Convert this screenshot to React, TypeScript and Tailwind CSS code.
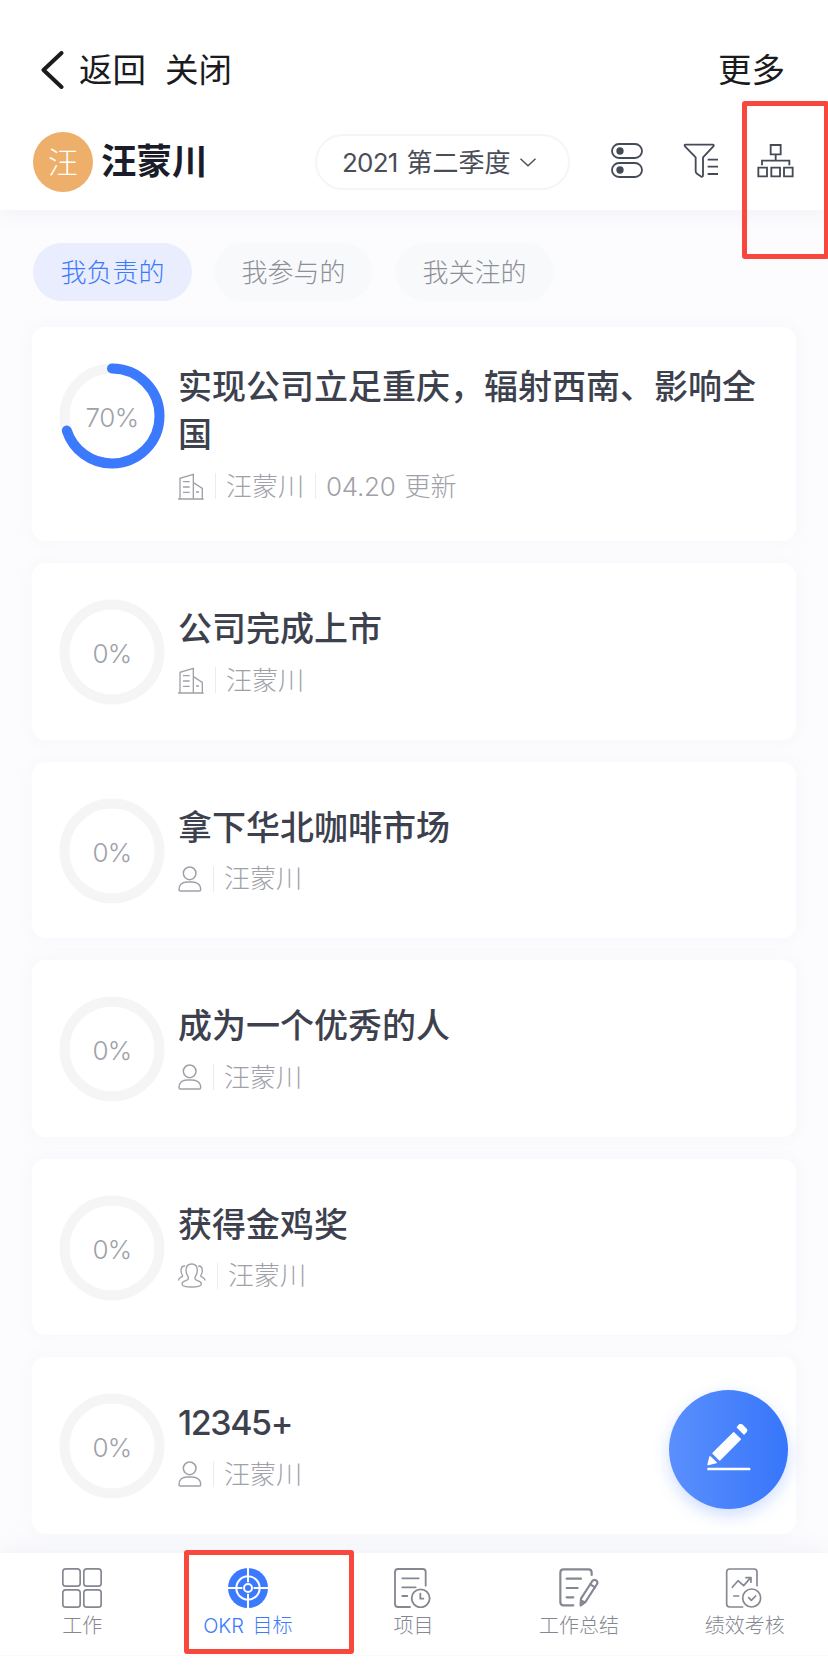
import React from "react";

type Owner = "company" | "person" | "team";

interface Objective {
  title: string;
  progress: number;
  owner: Owner;
  updated?: string;
}

const objectives: Objective[] = [
  { title: "实现公司立足重庆，辐射西南、影响全国", progress: 70, owner: "company", updated: "04.20" },
  { title: "公司完成上市", progress: 0, owner: "company" },
  { title: "拿下华北咖啡市场", progress: 0, owner: "person" },
  { title: "成为一个优秀的人", progress: 0, owner: "person" },
  { title: "获得金鸡奖", progress: 0, owner: "team" },
  { title: "12345+", progress: 0, owner: "person" },
];

const tabs = ["我负责的", "我参与的", "我关注的"];

const OwnerIcon = ({ owner }: { owner: Owner }) => {
  if (owner === "company") {
    return (
      <svg className="w-[26px] h-[27px]" viewBox="0 0 78 81" fill="none" stroke="currentColor" strokeWidth="4">
        <path d="M6 78V16L46 4v74M46 29l27 17v32M0 78h77M15 26h20M15 42h20M15 58h20M54 57h9" />
      </svg>
    );
  }
  if (owner === "person") {
    return (
      <svg className="w-[24px] h-[26px]" viewBox="0 0 72 78" fill="none" stroke="currentColor" strokeWidth="4.5">
        <circle cx="35" cy="22" r="19" />
        <path d="M3 71C3 55 14 48 27 48h15c14 0 26 7 26 23 0 3-1 4-4 4H7c-3 0-4-1-4-4Z" />
      </svg>
    );
  }
  return (
    <svg className="w-[28px] h-[25px]" viewBox="0 0 84 75" fill="none" stroke="currentColor" strokeWidth="4" strokeLinecap="round">
      <path d="M41 3c-11 0-17 8-17 19 0 9 3 14 6 19 3 6 0 9-7 12-8 3-11 5-11 9 0 7 12 10 29 10s29-3 29-10c0-4-3-6-11-9-7-3-10-6-7-12 3-5 6-10 6-19C58 11 52 3 41 3Z" />
      <path d="M20 9C12 9 9 15 9 23c0 6 2 10 4 13 2 4-1 6-5 7-4 2-6 4-6 8M62 9c8 0 11 6 11 14 0 6-2 10-4 13-2 4 1 6 5 7 4 2 7 4 7 8" />
    </svg>
  );
};

const ProgressRing = ({ value }: { value: number }) => (
  <div className="relative w-[106px] h-[106px] shrink-0">
    <svg className="w-full h-full -rotate-90" viewBox="0 0 106 106" fill="none" strokeWidth="10">
      <circle cx="53" cy="53" r="47.5" stroke="#f5f5f6" />
      {value > 0 && (
        <circle cx="53" cy="53" r="47.5" stroke="#3b7afc" strokeLinecap="round" pathLength={100} strokeDasharray={`${value} 100`} />
      )}
    </svg>
    <span className="absolute inset-0 top-[3px] flex items-center justify-center text-[26px] tracking-[-0.6px] font-light text-[#a0a1a8]">
      {value}%
    </span>
  </div>
);

const ObjectiveCard = ({ item }: { item: Objective }) => (
  <div
    className={`flex bg-white rounded-[14px] pl-[27px] pr-[36px] pt-[36px] shadow-[0_0_20px_rgba(60,80,140,0.035)] ${
      item.updated ? "h-[214px]" : "h-[176.5px]"
    }`}
  >
    <ProgressRing value={item.progress} />
    <div className={`ml-[13px] ${item.updated ? "" : "pt-[6px]"}`}>
      <h3
        className={`text-[34px] leading-[48px] font-medium text-[#3d414d] ${
          /^[\d+]+$/.test(item.title) ? "tracking-[-1.4px]" : ""
        }`}
      >
        {item.title}
      </h3>
      <div className="mt-[8px] h-[38px] flex items-center text-[26px] font-light text-[#a0a1a8]">
        <OwnerIcon owner={item.owner} />
        <span className="ml-[11px] w-px h-[26px] bg-[#ececef]" />
        <span className="ml-[10px]">汪蒙川</span>
        {item.updated && (
          <>
            <span className="ml-[11px] w-px h-[26px] bg-[#ececef]" />
            <span className="ml-[10px] tracking-[-0.3px]">{item.updated}</span>
            <span className="ml-[9px]">更新</span>
          </>
        )}
      </div>
    </div>
  </div>
);

const navItems = [
  {
    label: "工作",
    icon: (
      <g strokeWidth="5">
        <rect x="2.5" y="2.5" width="52" height="52" rx="9" />
        <rect x="65.5" y="2.5" width="52" height="52" rx="9" />
        <rect x="2.5" y="65.5" width="52" height="52" rx="9" />
        <rect x="65.5" y="65.5" width="52" height="52" rx="9" />
      </g>
    ),
  },
  {
    label: "OKR 目标",
    active: true,
    icon: (
      <g>
        <circle cx="60" cy="60" r="60" fill="#3b7afc" stroke="none" />
        <circle cx="60" cy="60" r="35" stroke="#fff" strokeWidth="6" />
        <path d="M60 0v43M60 77v43M0 60h43M77 60h43" stroke="#fff" strokeWidth="6" />
        <circle cx="60" cy="60" r="12" stroke="#fff" strokeWidth="6" />
      </g>
    ),
  },
  {
    label: "项目",
    icon: (
      <g strokeWidth="5.500" strokeLinecap="round">
        <path d="M51 117H15c-6 0-9-3-9-9V12c0-6 3-9 9-9h74c6 0 9 3 9 9v41M28 31h49M28 58h40M28 84h15" />
        <circle cx="83" cy="91" r="27" />
        <path d="M82 77v15h9" />
      </g>
    ),
  },
  {
    label: "工作总结",
    icon: (
      <g strokeWidth="6.500" strokeLinecap="round" strokeLinejoin="round">
        <path d="M43 112H14c-7 0-10-3-10-10V14C4 7 7 4 14 4h74c7 0 10 3 10 10v7M23 32h43M23 60h33M23 88h20" />
        <path d="m66 92 34-53c3-4 7-4 11-2 4 3 6 7 3 11L80 101l-15 11 1-20Z" />
        <path d="m94 49 14 9" />
        <path d="m66 97 11 6-11 8Z" fill="currentColor" />
      </g>
    ),
  },
  {
    label: "绩效考核",
    icon: (
      <g strokeWidth="5" strokeLinecap="round" strokeLinejoin="round">
        <path d="M53 117H14c-6 0-9-3-9-9V12c0-6 3-9 9-9h73c6 0 9 3 9 9v41M22 58l17-20 17 15 21-24M63 29h15v14M26 84h15" />
        <circle cx="80" cy="90" r="27" />
        <path d="m71 89 8 8 13-13" />
      </g>
    ),
  },
];

const App: React.FC = () => {
  return (
    <div className="relative w-[828px] h-[1680px] overflow-hidden flex flex-col bg-[#fcfcfe] font-['Inter','Noto_Sans_CJK_SC',sans-serif]">
      {/* HEADER */}
      <header className="h-[210px] shrink-0 bg-white shadow-[0_4px_18px_rgba(60,80,130,0.06)]">
        <div className="h-[140px] pl-[41px] pr-[43px] flex items-center text-[33.5px] text-[#1b1b1d]">
          <svg className="w-[23px] h-[38px]" viewBox="0 0 23 38" fill="none" stroke="currentColor" strokeWidth="4" strokeLinecap="round" strokeLinejoin="round">
            <path d="M20.500 2 2.500 19l18 17" />
          </svg>
          <span className="ml-[15px]">返回</span>
          <span className="ml-[19px]">关闭</span>
          <span className="ml-auto">更多</span>
        </div>

        <div className="h-[60px] -mt-[8px] pl-[33px] pr-[32px] flex items-center">
          <div className="w-[60px] h-[60px] rounded-full bg-[#edaf69] flex items-center justify-center text-[30px] text-white font-light">
            汪
          </div>
          <span className="ml-[8px] w-[214px] text-[35.5px] font-bold text-[#1a1d29]">汪蒙川</span>
          <div className="w-[255px] h-[56px] rounded-full border-2 border-[#f5f5f7] flex items-center pl-[25px] text-[26px] text-[#4a4d57]">
            <span className="tracking-[-0.8px]">2021</span>
            <span className="ml-[9px]">第二季度</span>
            <svg className="ml-[9px] w-[16px] h-[9px]" viewBox="0 0 16 9" fill="none" stroke="currentColor" strokeWidth="1.400">
              <path d="m.5.8 7.500 7 7.500-7" />
            </svg>
          </div>
          <svg className="ml-[41px] mb-[4px] w-[32px] h-[35px] text-[#454a57]" viewBox="0 0 96 105" fill="none" stroke="currentColor" strokeWidth="5.500">
            <rect x="3" y="3" width="90" height="42" rx="21" />
            <rect x="3" y="60" width="90" height="42" rx="21" />
            <circle cx="27" cy="24" r="11" fill="currentColor" stroke="none" />
            <circle cx="27" cy="81" r="11" fill="currentColor" stroke="none" />
          </svg>
          <svg className="ml-[40px] mb-[3px] w-[36px] h-[35px] text-[#454a57]" viewBox="0 0 108 105" fill="none" stroke="currentColor" strokeWidth="5.500" strokeLinejoin="round">
            <path d="M7 5h82c4 0 4 3 2 5L60 43v52c0 7-3 8-8 4l-10-7c-3-2-4-4-4-7V43L6 10C4 7 5 5 7 5ZM74 50h31M74 71h31M74 93h31" />
          </svg>
          <svg className="ml-[38px] mb-[2px] w-[37px] h-[34px] text-[#454a57]" viewBox="0 0 111 102" fill="none" stroke="currentColor" strokeWidth="5.500">
            <path d="M41 3h30v28H41ZM56 31v19M15 64V50h82v14M4 71h26v26H4ZM43 71h26v26H43ZM81 71h26v26H81Z" />
          </svg>
        </div>
      </header>

      {/* FILTER TABS */}
      <div className="mt-[33px] ml-[33px] flex gap-[22px]">
        {tabs.map((tab, i) => (
          <button
            key={tab}
            className={`w-[159px] h-[58px] rounded-full text-[26px] leading-[39px] font-light ${
              i === 0 ? "bg-[#e9edfd] text-[#3b7afc]" : "bg-[#f8f9fb] text-[#8d8f97]"
            }`}
          >
            {tab}
          </button>
        ))}
      </div>

      {/* OBJECTIVES */}
      <main className="mt-[26px] mx-[32px] flex flex-col gap-[22px]">
        {objectives.map((item) => (
          <ObjectiveCard key={item.title} item={item} />
        ))}
      </main>

      {/* BOTTOM NAV */}
      <nav className="absolute inset-x-0 bottom-0 h-[127px] bg-white shadow-[0_-4px_20px_rgba(60,80,130,0.06)]">
        <div className="h-[103px] flex border-b border-[#fafafb]">
          {navItems.map((item) => (
            <div
              key={item.label}
              className={`flex-1 pt-[15px] pr-[1px] flex flex-col items-center text-[20px] font-light ${
                item.active ? "text-[#3b7afc]" : "text-[#858791]"
              }`}
            >
              <svg className="w-[40px] h-[40px]" viewBox="0 0 120 120" fill="none" stroke="currentColor">
                {item.icon}
              </svg>
              <span className="mt-[4px] leading-[28px] whitespace-nowrap [word-spacing:3px]">{item.label}</span>
            </div>
          ))}
        </div>
      </nav>

      {/* NEW OBJECTIVE */}
      <button className="absolute left-[669px] top-[1390px] w-[119px] h-[119px] rounded-full bg-linear-to-r from-[#5a8ffd] to-[#3776fb] shadow-[0_6px_16px_rgba(59,122,252,0.25)]">
        <svg className="absolute left-[38px] top-[34px] w-[44px] h-[48px]" viewBox="0 0 132 144" fill="#fff" stroke="#fff" strokeWidth="4" strokeLinejoin="round">
          <path d="M95 5 91 10l20 20 5-5c4-4 4-7 1-10L106 4c-4-3-8-3-11 1ZM80 26 18 88l20 20 62-62ZM9 98 3 122l25-6ZM3 133h125v4H3Z" />
        </svg>
      </button>

      {/* HIGHLIGHT MARKS */}
      <div className="absolute left-[742px] top-[101px] w-[87px] h-[158px] rounded-[3px] border-[5px] border-[#f8483e]" />
      <div className="absolute left-[184px] top-[1550px] w-[170px] h-[104px] rounded-[3px] border-[5px] border-[#f8483e]" />
    </div>
  );
};

export default App;
